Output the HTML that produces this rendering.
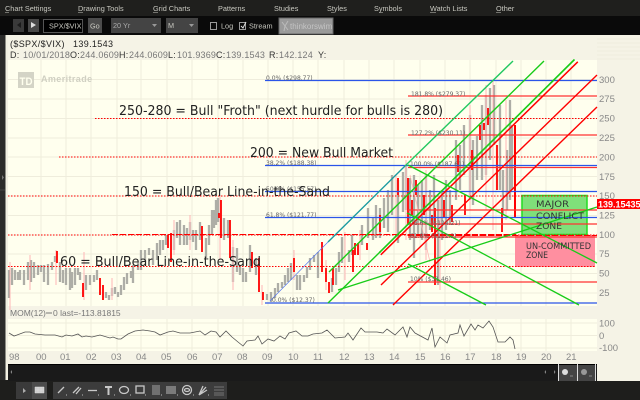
<!DOCTYPE html>
<html><head><meta charset="utf-8"><style>
html,body{margin:0;padding:0;width:640px;height:400px;overflow:hidden;background:#1e1e1c}
svg{display:block}
text{font-family:"Liberation Sans",sans-serif}
.m{fill:#c8c8c0;font-size:7.3px}
.f{fill:#666;font-size:6px;font-family:"DejaVu Sans",sans-serif}
.big{fill:#222;font-size:13.5px;font-family:"DejaVu Sans",sans-serif}
.a{fill:#888;font-size:9.5px}
.z{fill:#333;font-size:8.5px;font-family:"DejaVu Sans",sans-serif}
.d{fill:#777;font-size:9px;letter-spacing:.2px}
.k{fill:#333;font-size:9px;letter-spacing:.2px}
</style></head><body>
<svg width="640" height="400" viewBox="0 0 640 400" xmlns="http://www.w3.org/2000/svg">
<rect width="640" height="400" fill="#1e1e1c"/>
<!-- menu -->
<rect width="640" height="16" fill="#1f1f1d"/>
<rect y="16" width="640" height="19" fill="#0a0a0a"/>
<text class="m" x="5" y="11">Chart Settings</text><text class="m" x="78" y="11">Drawing Tools</text><text class="m" x="153" y="11">Grid Charts</text><text class="m" x="218" y="11">Patterns</text><text class="m" x="274" y="11">Studies</text><text class="m" x="327" y="11">Styles</text><text class="m" x="374" y="11">Symbols</text><text class="m" x="430" y="11">Watch Lists</text><text class="m" x="496" y="11">Other</text>
<path d="M5 12.5h4M78 12.5h5M153 12.5h5M331 12.5h3M379 12.5h4M430 12.5h6M496 12.5h5" stroke="#c8c8c0" stroke-width=".6"/>
<!-- toolbar -->
<rect x="13" y="19" width="11" height="13" fill="#3a3a3a"/><path d="M21 22v6l-4-3z" fill="#1c1c1c"/>
<rect x="28" y="19" width="11" height="13" fill="#484848"/><path d="M31 22v6l5-3z" fill="#ddd"/>
<rect x="43.500" y="19.500" width="39" height="13" fill="#000" stroke="#555"/><text class="m" x="49" y="28.500">SPX/$VIX</text>
<rect x="88" y="18" width="14" height="15" fill="#4c4c4c"/><text class="m" x="90" y="28.500">Go</text>
<rect x="111" y="18" width="50" height="15" fill="#444"/><text class="m" x="113" y="28" style="fill:#aaa">20 Yr</text><path d="M152 24h5l-2.500 3z" fill="#999"/>
<rect x="166" y="18" width="32" height="15" fill="#444"/><text class="m" x="168" y="28">M</text><path d="M189 24h5l-2.500 3z" fill="#999"/>
<rect x="210.500" y="22.500" width="6" height="7" fill="none" stroke="#999"/><text class="m" x="221" y="28.500">Log</text>
<rect x="239.500" y="22.500" width="6" height="7" fill="none" stroke="#999"/><path d="M241 26l2 2 3-6" stroke="#ddd" fill="none"/><text class="m" x="249" y="28.500">Stream</text>
<rect x="279" y="18" width="54" height="16" fill="#9a9a9a" stroke="#666"/><path d="M282 22l3 4-1 5M288 21l-3 5 3 4" stroke="#bbb" fill="none"/><text x="290" y="29" fill="#c4c4c4" style="font-size:8px">thinkorswim</text>
<!-- chart panel -->
<rect x="8" y="35" width="632" height="329" fill="#f5f3e6"/>
<path d="M597 39h43M597 43h43M597 47h43M597 51h43M597 55h43M597 59h43" stroke="#f0eedf"/>
<rect x="8" y="60" width="589" height="246" fill="#ffffee"/>
<rect x="8" y="319" width="589" height="32" fill="#ffffee"/>
<rect x="0" y="35" width="5.500" height="345" fill="#2b2b2a"/>
<rect x="5.500" y="35" width="2.500" height="345" fill="#f2f0e2"/>
<path d="M0 190h5" stroke="#444"/><path d="M2 175v5l2-2.500z" fill="#777"/>
<!-- grid -->
<path d="M41 60V306M66 60V306M91 60V306M117 60V306M141 60V306M167 60V306M192 60V306M218 60V306M243 60V306M268 60V306M293 60V306M318 60V306M344 60V306M369 60V306M394 60V306M420 60V306M445 60V306M470 60V306M496 60V306M521 60V306M546 60V306M571 60V306M8 79.500H597M8 99H597M8 118.500H597M8 138H597M8 157H597M8 176.500H597M8 196H597M8 215.500H597M8 235H597M8 254H597M8 273.500H597M8 293H597M41 319V351M66 319V351M91 319V351M117 319V351M141 319V351M167 319V351M192 319V351M218 319V351M243 319V351M268 319V351M293 319V351M318 319V351M344 319V351M369 319V351M394 319V351M420 319V351M445 319V351M470 319V351M496 319V351M521 319V351M546 319V351M571 319V351M8 323H597M8 335.500H597M8 348H597" stroke="#efeddc" stroke-width="1" fill="none"/>
<!-- zones -->
<rect x="515" y="235" width="80" height="32" fill="#ff8fa0"/>
<rect x="522" y="195.500" width="65" height="39" fill="#7fe07a" stroke="#22dd22" stroke-width="1.500"/>
<!-- candles -->
<defs><path id="c" d="M9 270V298M12 268V285M15 270V280M18 272V280M20 270V280M24 270V285M28 262V280M31 260V282M34 262V278M38 265V275M41 265V272M44 265V282M48 264V285M52 262V270M55 256V262M60 262V282M63 270V283M66 268V285M70 268V290M72 272V288M75 268V285M78 268V275M80 272V280M86 275V290M90 275V285M94 275V282M97 270V280M106 292V298M109 295V300M112 288V296M115 287V294M118 292V297M121 285V295M124 277V290M127 273V284M131 271V278M133 265V283M138 262V270M141 250V270M145 250V262M149 248V255M153 250V265M157 243V260M160 240V255M163 240V250M166 235V245M174 230V250M177 222V238M180 220V245M184 225V245M187 228V245M190 222V240M193 230V242M196 230V250M200 222V240M206 238V258M209 225V245M212 210V235M214 210V228M216 200V225M218 198V222M224 218V240M228 220V238M233 247V282M237 248V272M240 265V275M243 268V282M246 272V282M250 245V272M256 258V275M267 294V300M271 292V302M275 288V298M278 283V292M282 282V288M285 275V285M288 268V282M291 263V280M297 275V290M300 275V290M304 275V282M307 267V278M310 258V270M314 255V262M318 252V278M332 278V292M336 268V285M339 252V272M342 237V263M349 250V262M352 235V255M362 225V245M368 208V238M373 217V240M376 205V238M380 208V238M384 198V228M388 190V232M392 175V215M398 180V243M403 172V212M406 165V210M410 178V240M414 175V258M418 185V235M422 180V240M426 175V250M430 190V230M434 175V225M438 200V285M442 190V240M446 180V230M450 190V225M456 140V200M460 145V190M464 125V175M470 115V200M473 140V205M477 136V180M482 105V180M486 95V175M490 88V160M494 85V145M500 105V190M503 170V215M507 150V210M510 100V200M512 125V190"/></defs>
<g stroke="#c2c2ba" stroke-width="2.400" fill="none"><use href="#c"/></g>
<g stroke="#8a8a84" stroke-width=".7" fill="none"><use href="#c"/></g>
<path d="M10 262V310M30 255V290M56 250V285M84 252V300M112 278V300M174 220V255M190 215V250M220 195V260M233 240V290M262 285V305M294 250V280M326 260V290M345 232V280M360 230V260M396 175V240M406 160V240M426 170V260M440 195V290M470 105V210M486 85V210M493 80V230M506 100V220" stroke="#ffb5b5" stroke-width="1" fill="none"/>
<path d="M57 251V263M83 283V297M100 278V295M103 285V300M168 235V248M171 233V262M202 226V252M219 213V218M221 200V238M230 220V258M252 252V268M259 258V292M263 292V300M294 258V272M322 242V272M326 268V282M329 282V293M333 268V285M353 250V272M355 243V255M358 243V255M367 243V250M380 215V232M398 178V195M408 178V225M412 200V215M416 180V195M424 195V215M432 215V232M435 208V285M444 200V218M452 205V222M458 155V172M465 195V215M472 150V170M480 125V140M484 123V130M488 108V125M497 145V190M502 208V232" stroke="#f00" stroke-width="1.800" fill="none"/>
<path d="M515 125V218" stroke="#f00" stroke-width="2"/>
<!-- horizontals -->
<path d="M408 96H597M408 135H597M408 167.500H597M408 210H597M408 224H597M408 237H597M408 282H597" stroke="#f33" stroke-width="1.300" fill="none"/>
<path d="M265 80.500H597M265 165.500H597M265 191.500H597M265 217.500H597M265 303H597" stroke="#2b55e8" stroke-width="1.300"/>
<path d="M95 118.500H597M59 157H597M8 196H597M8 235H597M8 266.500H595" stroke="#f00" stroke-width="1" stroke-dasharray="1.500 1.500" fill="none"/>
<path d="M112 234.500H516M408 235.500H597" stroke="#f00" stroke-width="1" stroke-dasharray="6 2" fill="none"/>
<path d="M410 175L430 262" stroke="#ffb0b0" stroke-width=".7" fill="none"/>
<!-- channel -->
<path d="M270 301L328 242" stroke="#5577ee" stroke-width=".7"/>
<path d="M328 242L405 166" stroke="#1a9aa0" stroke-width="1.400"/>
<path d="M405 166L513 61" stroke="#22c860" stroke-width="1.400"/>
<path d="M380.800 254.800L577.800 61.800" stroke="#f00" stroke-width="1.500"/>
<path d="M381 285L597 75M393 305L597 107" stroke="#f00" stroke-width="1.400" fill="none"/>
<path d="M329 272L544 61M328 303L380 252" stroke="#18cc18" stroke-width="1.400" fill="none"/>
<path d="M379.500 252.500L574.500 59.500" stroke="#18cc18" stroke-width="1.600" fill="none"/>
<path d="M408 165L597 263M407 213L579 305M408 264L486 305M338 290L597 207" stroke="#18cc18" stroke-width="1.300" fill="none"/>
<!-- momentum -->
<polyline fill="none" stroke="#555" stroke-width=".8" points="9,333 14,336 17,335 25,332 30,332 35,334 45,335 55,335 62,337 66,335 72,336 78,334 82,337 86,336 92,337 96,336 100,335 110,338 113,337 118,339 121,339 128,334 135,331 143,330 150,331 155,332 160,335 168,332 173,331 180,333 190,333 200,331 205,335 211,331 216,332 220,337 226,331 232,337 238,342 243,346 247,341 255,340 258,336 262,344 268,339 274,341 280,336 285,339 289,333 296,331 302,336 308,336 313,334 322,333 327,330 335,338 345,337 348,333 353,340 361,328 365,332 377,332 383,333 387,329 395,335 403,327 407,337 410,327 415,333 428,340 432,328 435,347 440,337 447,343 450,335 458,333 460,325 464,336 471,324 475,330 478,325 483,328 489,321 493,327 498,342 505,342 510,337 513,340 515,349"/>
<!-- header text -->
<text x="10" y="47" fill="#222" style="font-size:9px;letter-spacing:.35px">($SPX/$VIX)</text><text x="73" y="47" fill="#222" style="font-size:9px;letter-spacing:.35px">139.1543</text>
<text class="k" x="10" y="58">D:</text><text class="d" x="23" y="58">10/01/2018</text><text class="k" x="70" y="58">O:</text><text class="d" x="80" y="58">244.0609</text><text class="k" x="119" y="58">H:</text><text class="d" x="129" y="58">244.0609</text><text class="k" x="168" y="58">L:</text><text class="d" x="177" y="58">101.9369</text><text class="k" x="216" y="58">C:</text><text class="d" x="226" y="58">139.1543</text><text class="k" x="269" y="58">R:</text><text class="d" x="279" y="58">142.124</text><text class="k" x="318" y="58">Y:</text>
<!-- TD logo -->
<rect x="18" y="72" width="16" height="16" fill="#d4d4c6"/><text x="19.500" y="85" fill="#ffffee" style="font-size:11px;font-weight:bold;font-family:'Liberation Sans',sans-serif" textLength="13" lengthAdjust="spacingAndGlyphs">TD</text>
<text x="41" y="82" fill="#d0d0c2" style="font-size:9px;font-weight:bold;letter-spacing:.4px">Ameritrade</text>
<!-- fib labels -->
<text class="f" x="266" y="80">0.0%  ($298.77)</text><text class="f" x="411" y="96">181.8%  ($279.37)</text><text class="f" x="411" y="135">127.2%  ($230.11)</text><text class="f" x="410" y="166">100.0%  ($187.61)</text><text class="f" x="266" y="165">38.2%  ($188.38)</text><text class="f" x="266" y="191">50.0%  ($155.57)</text><text class="f" x="266" y="217">61.8%  ($121.77)</text><text class="f" x="272" y="302">0.0%  ($12.37)</text><text class="f" x="410" y="225">78.6%  ($124.21)</text><text class="f" x="410" y="238">61.8%  ($112.2)</text><text class="f" x="410" y="281">10%  ($31.46)</text>
<!-- annotations -->
<text class="big" x="119" y="115" textLength="324" lengthAdjust="spacingAndGlyphs">250-280 = Bull "Froth" (next hurdle for bulls is 280)</text>
<text class="big" x="250" y="157" textLength="143" lengthAdjust="spacingAndGlyphs">200 = New Bull Market</text>
<text class="big" x="124" y="196" textLength="206" lengthAdjust="spacingAndGlyphs">150 = Bull/Bear Line-in-the-Sand</text>
<text class="big" x="60" y="266" textLength="201" lengthAdjust="spacingAndGlyphs">60 = Bull/Bear Line-in-the-Sand</text>
<text class="z" x="536" y="207" textLength="33" lengthAdjust="spacingAndGlyphs">MAJOR</text><text class="z" x="536" y="219" textLength="48" lengthAdjust="spacingAndGlyphs">CONFLICT</text><text class="z" x="536" y="229" textLength="26" lengthAdjust="spacingAndGlyphs">ZONE</text>
<text class="z" x="526" y="249" textLength="65" lengthAdjust="spacingAndGlyphs">UN-COMMITTED</text><text class="z" x="526" y="258" textLength="22" lengthAdjust="spacingAndGlyphs">ZONE</text>
<!-- price axis -->
<g><text class="a" x="599" y="83">300</text><text class="a" x="599" y="102">275</text><text class="a" x="599" y="121.500">250</text><text class="a" x="599" y="141">225</text><text class="a" x="599" y="160.500">200</text><text class="a" x="599" y="180">175</text><text class="a" x="599" y="199">150</text><text class="a" x="599" y="218.500">125</text><text class="a" x="599" y="238">100</text><text class="a" x="599" y="257">75</text><text class="a" x="599" y="276.500">50</text><text class="a" x="599" y="296">25</text></g>
<rect x="597" y="199" width="43" height="10" fill="#f00"/><text x="598" y="207.500" fill="#fff" style="font-size:9px;font-weight:bold">139.15435</text>
<!-- mom labels -->
<text x="10" y="316" fill="#777" style="font-size:8.500px">MOM(12)</text><path d="M46 313h6" stroke="#777"/><text x="53" y="316" fill="#777" style="font-size:8.500px">0 last=-113.81815</text>
<text class="a" x="599" y="326.500">100</text><text class="a" x="599" y="339">0</text><text class="a" x="599" y="351">-100</text>
<g><text class="a" x="9" y="360">98</text><text class="a" x="36" y="360">00</text><text class="a" x="60" y="360">01</text><text class="a" x="86" y="360">02</text><text class="a" x="111" y="360">03</text><text class="a" x="136" y="360">04</text><text class="a" x="161" y="360">05</text><text class="a" x="187" y="360">06</text><text class="a" x="212" y="360">07</text><text class="a" x="237" y="360">08</text><text class="a" x="262" y="360">09</text><text class="a" x="288" y="360">10</text><text class="a" x="313" y="360">11</text><text class="a" x="339" y="360">12</text><text class="a" x="364" y="360">13</text><text class="a" x="389" y="360">14</text><text class="a" x="415" y="360">15</text><text class="a" x="440" y="360">16</text><text class="a" x="465" y="360">17</text><text class="a" x="491" y="360">18</text><text class="a" x="516" y="360">19</text><text class="a" x="541" y="360">20</text><text class="a" x="566" y="360">21</text></g>
<!-- scroll bar -->
<rect x="8" y="364" width="589" height="17" fill="#1a1a1a"/>
<path d="M8 364.500H597" stroke="#000"/>
<path d="M12 370v4l-1.500-2z" fill="#888"/><path d="M546 370v4l-1.500-2zM554 370v4l1.500-2z" fill="#888"/>
<rect x="559" y="365" width="18" height="16" fill="#444"/><rect x="578" y="365" width="17" height="16" fill="#444"/>
<path d="M558.500 364v17M577.500 364v17M595.500 364v17" stroke="#ddd"/>
<circle cx="565" cy="372" r="3" fill="#ddd"/><circle cx="584" cy="372" r="3" fill="#999"/>
<path d="M570 376h3M589 376h3" stroke="#888"/>
<rect x="597" y="364" width="43" height="17" fill="#f5f3e6"/>
<!-- bottom toolbar -->
<rect y="381" width="640" height="19" fill="#1e1e1c"/>
<rect x="16" y="382" width="16" height="17" fill="#3a3a3a"/><rect x="32" y="382" width="15" height="17" fill="#4c4c4c"/>
<path d="M23 388v5l3-2z" fill="#aaa"/><path d="M35 387h9v6h-9zM38 387v6M41 387v6M35 390h9" stroke="#ddd" fill="#ccc" stroke-width=".5"/>
<rect x="53" y="382" width="174" height="17" fill="#3c3c3c"/>
<g fill="none" stroke="#c8c8c8" stroke-width="1.300">
<path d="M58 393l6-6"/><path d="M73 393l6-6M76 394l5-6"/><path d="M88 390.500h9"/>
<path d="M105 387h7M108.500 387v8" stroke-width="2"/><ellipse cx="124" cy="390" rx="4.500" ry="3.500"/><rect x="136" y="386" width="8" height="7"/>
<path d="M152 386h8M152 388h8M152 390h8M152 392h8M152 394h8" stroke-width=".8"/>
<path d="M167 386v8M169 386v8M171 386v8M173 386v8M175 386v8" stroke-width=".9"/>
<circle cx="187" cy="390" r="4.500"/><ellipse cx="187" cy="390" rx="2.500" ry="1.500"/><path d="M199 395l7-8M199 395l8-5M199 395l4-9"/>
<path d="M214 387h10M214 390h10M214 393h10M214 395h10" stroke="#6a6a6a"/></g>
<path d="M66 395h1M82 395h1M98 395h1M114 395h1M130 395h1M145 395h1M161 395h1M177 395h1M193 395h1M208 395h1" stroke="#bbb"/>
</svg>
</body></html>
